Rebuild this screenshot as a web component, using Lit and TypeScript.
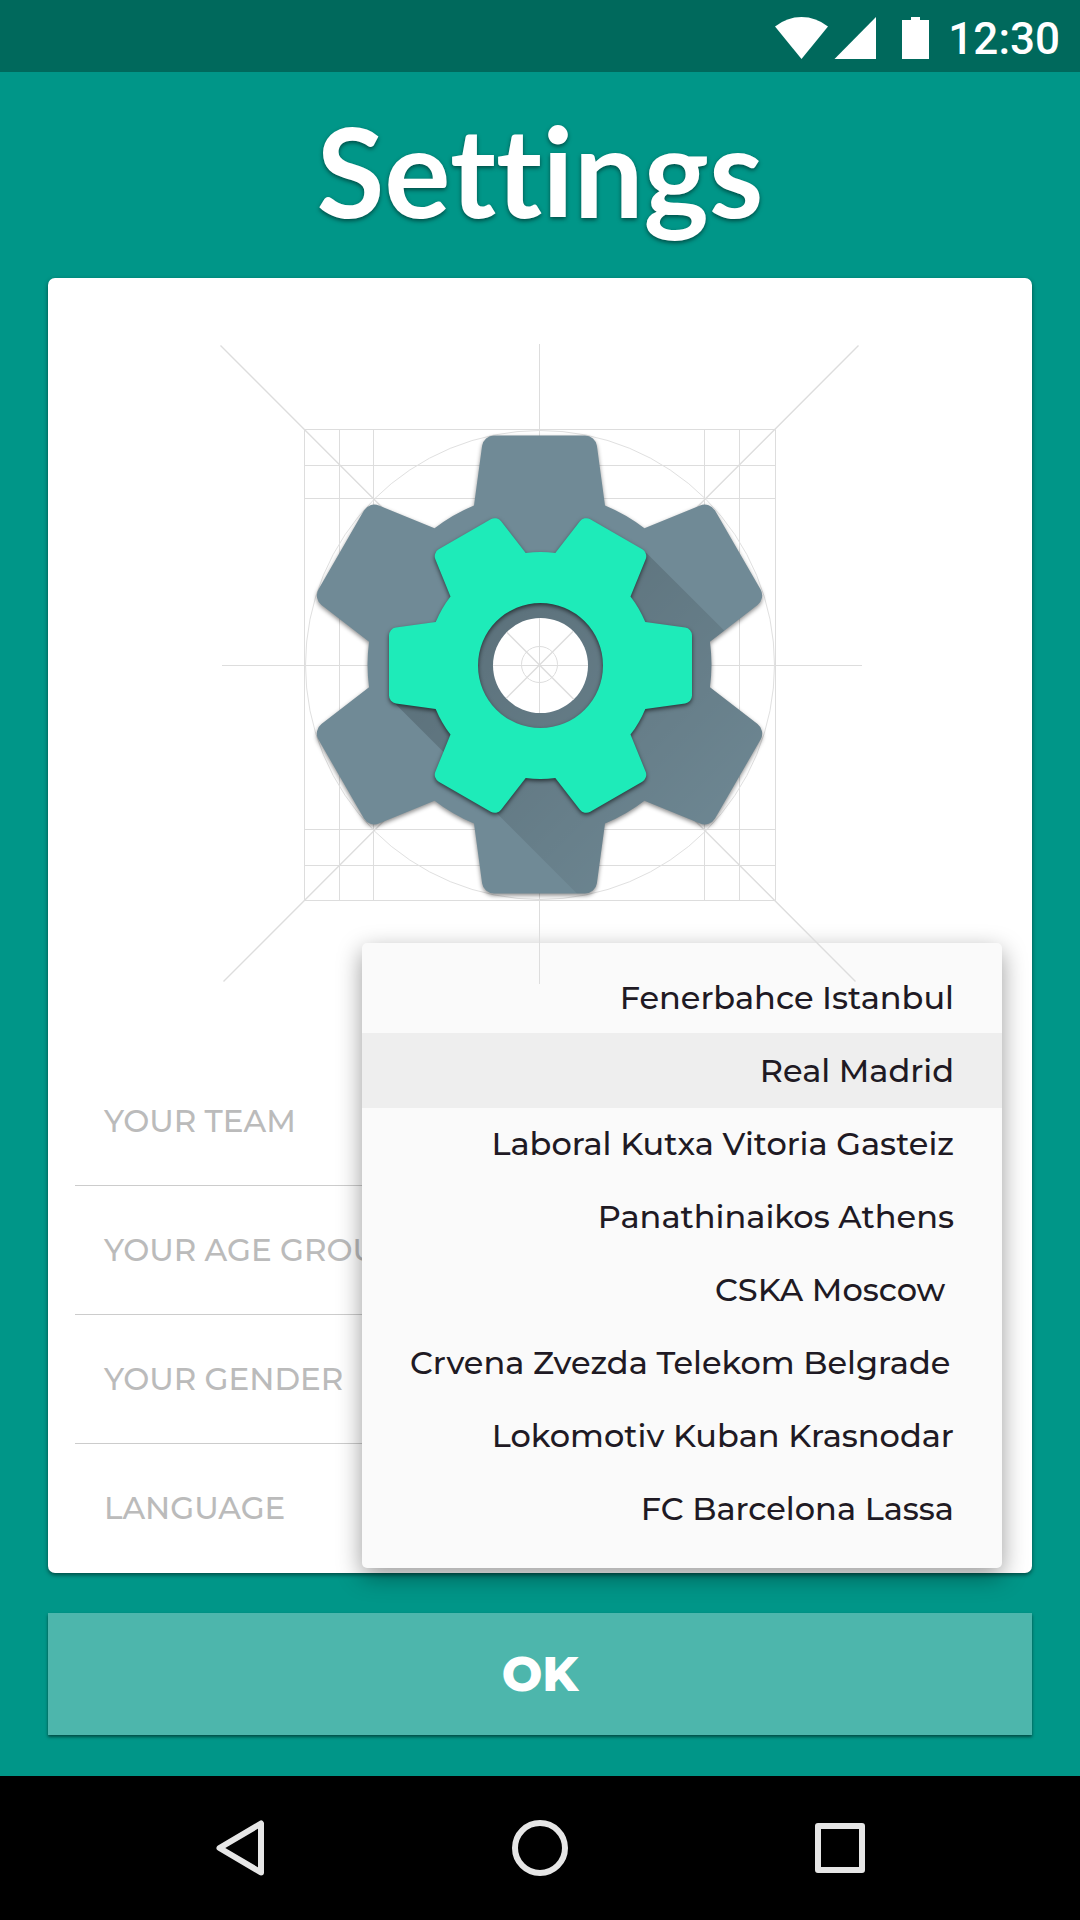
import { LitElement, html, css, svg } from "lit";
import { customElement, property, state } from "lit/decorators.js";
import { classMap } from "lit/directives/class-map.js";

type Point = [number, number];

interface GearShape {
  cx: number;
  cy: number;
  hub: number;
  base: Point;
  corner: Point;
  round: number;
  turn: number;
}

const turnBy = ([x, y]: Point, degrees: number): Point => {
  const a = (degrees * Math.PI) / 180;
  return [x * Math.cos(a) - y * Math.sin(a), x * Math.sin(a) + y * Math.cos(a)];
};

const towards = (from: Point, to: Point, distance: number): Point => {
  const length = Math.hypot(to[0] - from[0], to[1] - from[1]);
  return [
    from[0] + ((to[0] - from[0]) * distance) / length,
    from[1] + ((to[1] - from[1]) * distance) / length,
  ];
};

/** Outline of a six-toothed gear; base and corner describe half a tooth. */
function gearPath(g: GearShape): string {
  const [bx, by] = g.base;
  const [cx, cy] = g.corner;
  const parts: string[] = [];
  for (let i = 0; i < 6; i++) {
    const angle = g.turn + i * 60;
    const at = (p: Point) => {
      const [x, y] = turnBy(p, angle);
      return `${(x + g.cx).toFixed(2)} ${(y + g.cy).toFixed(2)}`;
    };
    const left: Point = [-cx, -cy];
    const right: Point = [cx, -cy];
    const inset = g.round * 0.87;
    const start = at([-bx, -by]);
    parts.push(i === 0 ? `M${start}` : `A${g.hub} ${g.hub} 0 0 1 ${start}`);
    parts.push(`L${at(towards(left, [-bx, -by], inset))}`);
    parts.push(`A${g.round} ${g.round} 0 0 1 ${at(towards(left, right, inset))}`);
    parts.push(`L${at(towards(right, left, inset))}`);
    parts.push(`A${g.round} ${g.round} 0 0 1 ${at(towards(right, [bx, -by], inset))}`);
    parts.push(`L${at([bx, -by])}`);
    if (i === 5) {
      const [x, y] = turnBy([-bx, -by], g.turn);
      parts.push(`A${g.hub} ${g.hub} 0 0 1 ${(x + g.cx).toFixed(2)} ${(y + g.cy).toFixed(2)}`);
    }
  }
  return parts.join("") + "Z";
}

const OUTER = gearPath({
  cx: 539.5, cy: 664.5, hub: 172, base: [65.5, 159], corner: [56, 229], round: 12, turn: 0,
});
const INNER = gearPath({
  cx: 540.5, cy: 665.5, hub: 113.5, base: [43.4, 104.8], corner: [37, 151.5], round: 8, turn: 30,
});
const RING = "M478 665.5a62.5 62.5 0 1 0 125 0a62.5 62.5 0 1 0 -125 0Z";

@customElement("gear-art")
export class GearArt extends LitElement {
  static styles = css`
    :host {
      display: block;
    }
    .art {
      display: block;
      width: 100%;
    }
    .guide {
      fill: none;
      stroke: #dddddd;
      stroke-width: 1;
    }
    .soft {
      stroke: #e0e0e0;
    }
    .slant {
      stroke-width: 1.4;
    }
    .outer {
      fill: #708a96;
      filter: drop-shadow(0 2px 2px rgba(0, 0, 0, 0.45));
    }
    .inner {
      fill: #1eebb9;
      filter: drop-shadow(0 2px 2px rgba(0, 0, 0, 0.6));
    }
    .hole {
      fill: #ffffff;
    }
  `;

  render() {
    return html`<svg class="art" viewBox="216 340 648 648" aria-hidden="true">
      ${svg`
        <defs>
          <clipPath id="outer-clip"><path d=${OUTER}></path></clipPath>
          <clipPath id="hole-clip"><circle cx="540.5" cy="665.5" r="47.5"></circle></clipPath>
          <linearGradient id="cast" gradientUnits="userSpaceOnUse" x1="500" y1="625" x2="725" y2="850">
            <stop offset="0" stop-opacity="0.17"></stop>
            <stop offset="1" stop-opacity="0.02"></stop>
          </linearGradient>
          <g id="axes">
            <path class="guide" d="M539.500 344V984M222 665.500H862"></path>
            <path class="guide slant" d="M220.500 345.500L855.500 981.500M858.500 345.500L223.500 981.500"></path>
            <circle class="guide" cx="539.500" cy="664.500" r="18"></circle>
          </g>
        </defs>
        <use href="#axes"></use>
        <path class="guide" d="M304.500 429.500H775.500V900.500H304.500ZM339.500 429V900M373.500 429V900M704.500 429V900M739.500 429V900M304 465.500H775M304 498.500H775M304 829.500H775M304 865.500H775"></path>
        <circle class="guide soft" cx="540" cy="665" r="234.500"></circle>
        <path class="outer" d=${OUTER}></path>
        <path clip-path="url(#outer-clip)" fill="url(#cast)" d="M394 702.500L443 751.500L497.500 814L797 1114L947 853L646.500 553L500 590Z"></path>
        <path class="inner" fill-rule="evenodd" d=${INNER + RING}></path>
        <circle class="hole" cx="540.500" cy="665.500" r="47.500"></circle>
        <use href="#axes" clip-path="url(#hole-clip)"></use>
      `}
    </svg>`;
  }
}

@customElement("status-bar")
export class StatusBar extends LitElement {
  @property() time = "";

  static styles = css`
    :host {
      display: flex;
      align-items: center;
      justify-content: flex-end;
      height: 72px;
      padding: 0 20px;
      background: #00695c;
      color: #ffffff;
    }
    .icons {
      width: 154px;
      height: 42px;
      margin: 4px 19px 0 0;
      fill: currentColor;
    }
    .time {
      font: 500 44px/70px Roboto, sans-serif;
      padding-top: 6px;
    }
  `;

  render() {
    return html`
      <svg class="icons" viewBox="775 17 154 42" aria-hidden="true">
        <path d="M775 26.500Q787 17 801.500 17T828 26.500L801.500 59Z"></path>
        <path d="M876 17V59H834.500Z"></path>
        <path d="M911 17H920V20H929V59H902V20H911Z"></path>
      </svg>
      <span class="time">${this.time}</span>
    `;
  }
}

@customElement("nav-bar")
export class NavBar extends LitElement {
  static styles = css`
    :host {
      display: grid;
      grid-template-columns: repeat(3, 1fr);
      height: 144px;
      padding: 0 90px;
      background: #000000;
    }
    .key {
      display: grid;
      place-items: center;
      border: 0;
      padding: 0;
      background: none;
    }
    .glyph {
      width: 60px;
      height: 60px;
      fill: none;
      stroke: #e6e6e6;
      stroke-width: 6;
      stroke-linejoin: round;
    }
  `;

  render() {
    return html`
      <button class="key" aria-label="Back">
        <svg class="glyph" viewBox="0 0 60 60"><path d="M9.500 30L51 5.500V54.500Z"></path></svg>
      </button>
      <button class="key" aria-label="Home">
        <svg class="glyph" viewBox="0 0 60 60"><circle cx="30" cy="30" r="25"></circle></svg>
      </button>
      <button class="key" aria-label="Overview">
        <svg class="glyph" viewBox="0 0 60 60"><path d="M8 8H52V52H8Z"></path></svg>
      </button>
    `;
  }
}

@customElement("app-root")
export class AppRoot extends LitElement {
  @state() private selected = 1;

  private fields = ["YOUR TEAM", "YOUR AGE GROUP", "YOUR GENDER", "LANGUAGE"];

  private teams = [
    "Fenerbahce Istanbul",
    "Real Madrid",
    "Laboral Kutxa Vitoria Gasteiz",
    "Panathinaikos Athens",
    "CSKA Moscow ",
    "Crvena Zvezda Telekom Belgrade ",
    "Lokomotiv Kuban Krasnodar",
    "FC Barcelona Lassa",
  ];

  static styles = css`
    :host {
      display: flex;
      flex-direction: column;
      min-height: 100vh;
      background: #009688;
      font-family: Montserrat, Inter, sans-serif;
    }
    .content {
      flex: 1;
      display: flex;
      flex-direction: column;
      padding: 0 48px 41px;
    }
    .title {
      margin: 0;
      height: 206px;
      font: 700 124px/196px Lato, sans-serif;
      font-variant-ligatures: none;
      text-align: center;
      color: #ffffff;
      text-shadow: 0 2px 4px rgba(0, 0, 0, 0.5);
    }
    .card {
      position: relative;
      flex: 1;
      display: flex;
      flex-direction: column;
      border-radius: 7px;
      background: #ffffff;
      box-shadow: 0 2px 4px rgba(0, 0, 0, 0.5);
    }
    .art {
      position: relative;
      z-index: 2;
      width: 648px;
      max-width: 100%;
      margin: 62px auto 0;
      pointer-events: none;
    }
    .fields {
      display: flex;
      flex-direction: column;
      margin: auto 30px 0 27px;
    }
    .field {
      box-sizing: border-box;
      height: 129px;
      padding: 0 29px;
      border: 0;
      border-bottom: 1px solid #cccccc;
      background: none;
      font: 500 31px/40px Montserrat, Inter, sans-serif;
      text-align: left;
      color: #bbbbbb;
    }
    .field:last-child {
      border-bottom-color: transparent;
    }
    .menu {
      position: absolute;
      z-index: 1;
      right: 30px;
      bottom: 5px;
      width: 640px;
      max-width: calc(100% - 60px);
      box-sizing: border-box;
      padding: 18px 0 23px;
      border-radius: 5px;
      background: #fafafa;
      box-shadow: 0 8px 24px rgba(0, 0, 0, 0.4);
    }
    .option {
      display: block;
      width: 100%;
      height: 73px;
      padding: 0 48px;
      border: 0;
      background: none;
      font: 500 32px/73px Montserrat, Inter, sans-serif;
      text-align: right;
      white-space: pre;
      color: #1f1a24;
    }
    .chosen {
      background: #eeeeee;
      box-shadow: 0 1px 0 #eeeeee, 0 -1px 0 #eeeeee;
    }
    .ok {
      height: 122px;
      margin-top: 40px;
      border: 0;
      background: #4db6ac;
      font: 800 48px/60px Montserrat, Inter, sans-serif;
      color: #ffffff;
      box-shadow: 0 2px 3px rgba(0, 0, 0, 0.5);
    }
  `;

  render() {
    return html`
      <status-bar time="12:30"></status-bar>
      <main class="content">
        <h1 class="title">Settings</h1>
        <section class="card">
          <gear-art class="art"></gear-art>
          <div class="fields">
            ${this.fields.map(
              (name) => html`<button class="field" aria-haspopup="listbox">${name}</button>`
            )}
          </div>
          <div class="menu" role="listbox" aria-label="Team">
            ${this.teams.map(
              (team, i) => html`<button
                class=${classMap({ option: true, chosen: i === this.selected })}
                role="option"
                aria-selected=${i === this.selected ? "true" : "false"}
                @click=${() => (this.selected = i)}
              >${team}</button>`
            )}
          </div>
        </section>
        <button class="ok">OK</button>
      </main>
      <nav-bar></nav-bar>
    `;
  }
}
